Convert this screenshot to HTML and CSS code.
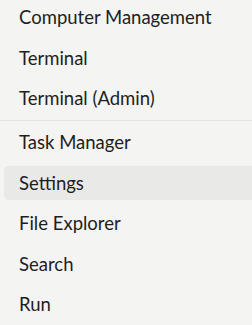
FILE: index.html
```html
<!DOCTYPE html>
<html>
<head>
<meta charset="utf-8">
<link rel="stylesheet" href="styles.css">
</head>
<body>
<div class="menu">
  <div class="group">
    <div class="item">Computer Management</div>
    <div class="item">Terminal</div>
    <div class="item">Terminal (Admin)</div>
  </div>
  <div class="sep"></div>
  <div class="group">
    <div class="item">Task Manager</div>
    <div class="item active">Settings</div>
    <div class="item">File Explorer</div>
    <div class="item">Search</div>
    <div class="item">Run</div>
  </div>
</div>
</body>
</html>
```
FILE: styles.css
```css
html, body {
  margin: 0;
  padding: 0;
  background: #f4f4f2;
}
body {
  width: 252px;
  height: 325px;
  overflow: hidden;
  font-family: Lato, Roboto, sans-serif;
  color: #1e1e1e;
}
.menu {
  display: flex;
  flex-direction: column;
}
.group {
  display: flex;
  flex-direction: column;
  gap: 6.5px;
}
.item {
  height: 34px;
  margin-left: 4px;
  padding-left: 15px;
  display: flex;
  align-items: center;
  font-size: 18.5px;
  border-radius: 5px 0 0 5px;
}
.item.active {
  background: #e9e9e7;
}
.sep {
  height: 1px;
  background: #e3e3e1;
  margin: 4.5px 0 4.5px 0;
}
```
